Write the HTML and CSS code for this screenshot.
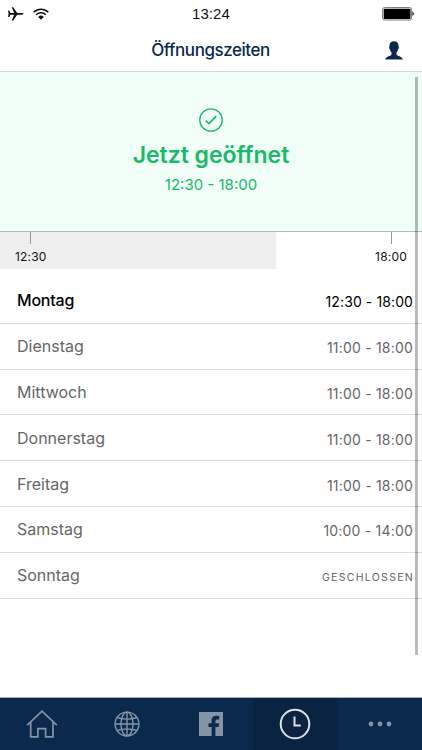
FILE: index.html
```html
<!DOCTYPE html>
<html lang="de">
<head>
    <meta charset="UTF-8">
    <meta name="viewport" content="width=device-width, initial-scale=1.0">
    <title>Öffnungszeiten</title>
    <link rel="stylesheet" href="styles.css">
</head>
<body>
    <div class="app">
        <div class="status-bar">
            <div class="signal">
                <svg width="16" height="14" viewBox="0 0 16 14"><path d="M0 3.400h1.100L2.600 5.900H6.200L3.700.3h1.500L9.200 5.900h4.600c2.300 0 2.300 1.800 0 1.800H9.200l-4 5.800H3.700l2.500-5.800H2.600L1.100 10H0l.6-3.200z" fill="#111"/></svg>
                <svg width="16" height="12" viewBox="0 0 16 12"><g fill="none" stroke="#111" stroke-width="1.500"><path d="M.7 4.200a10.300 10.300 0 0 1 14.600 0"/><path d="M3.100 6.700a6.900 6.900 0 0 1 9.800 0"/></g><path d="M5.200 8.900a4 4 0 0 1 5.600 0L8 11.700z" fill="#111"/></svg>
            </div>
            <span class="clock">13:24</span>
            <svg class="battery" width="32" height="14" viewBox="0 0 32 14"><rect x=".6" y=".6" width="29" height="12.400" rx="2" fill="#fff" stroke="#777" stroke-width="1"/><rect x="1.700" y="1.700" width="26.800" height="10.200" rx="1" fill="#000"/><path d="M30.400 4.800c2 .7 2 3.300 0 4z" fill="#222"/></svg>
        </div>

        <header class="header">
            <h1>Öffnungszeiten</h1>
            <svg class="user" width="18" height="19" viewBox="0 0 18 19"><path d="M9 .3c3 0 4.600 1.800 4.500 4.800 0 .7.6 1 .3 2.200-.2.7-.6.9-.8 1.300-.3 1.500-.9 2.300-1.500 3v2c.5 1.500 5.700 1.800 6.200 4.900H.3c.5-3.100 5.700-3.400 6.200-4.900v-2c-.6-.7-1.200-1.500-1.500-3-.2-.4-.6-.6-.8-1.300-.3-1.200.3-1.500.3-2.200C4.400 2.100 6 .3 9 .3z" fill="#0b294d"/></svg>
        </header>

        <main class="content">
            <section class="current">
                <svg width="24" height="24" viewBox="0 0 24 24" fill="none" stroke="#19b96a"><circle cx="12" cy="12" r="11.200" stroke-width="1.300"/><path d="M6.700 12.600l3.300 3 7.200-7.500" stroke-width="1.700"/></svg>
                <h2>Jetzt geöffnet</h2>
                <p>12:30 - 18:00</p>
            </section>

            <div class="timeline">
                <div class="elapsed"></div>
                <div class="tick">12:30</div>
                <div class="tick">18:00</div>
            </div>

            <ul class="days">
                <li class="today"><span>Montag</span><time>12:30 - 18:00</time></li>
                <li><span>Dienstag</span><time>11:00 - 18:00</time></li>
                <li><span>Mittwoch</span><time>11:00 - 18:00</time></li>
                <li><span>Donnerstag</span><time>11:00 - 18:00</time></li>
                <li><span>Freitag</span><time>11:00 - 18:00</time></li>
                <li><span>Samstag</span><time>10:00 - 14:00</time></li>
                <li><span>Sonntag</span><time class="closed">GESCHLOSSEN</time></li>
            </ul>
            <div class="scrollbar"></div>
        </main>

        <nav class="tabs">
            <a class="tab"><svg width="32" height="28" viewBox="0 0 32 28" fill="none" stroke="#8494a6" stroke-width="1.700"><path d="M1.200 15.200L16 1.200l14.800 14M4.700 12.300v14.500h7.200v-8.200h7.700v8.200h7.400V12.300"/></svg></a>
            <a class="tab"><svg width="26" height="26" viewBox="0 0 26 26" fill="none" stroke="#8494a6" stroke-width="1.400"><circle cx="13" cy="13" r="11.900"/><ellipse cx="13" cy="13" rx="6" ry="11.900"/><path d="M13 1v24M1 13h24M3 6.500c6 2 14 2 20 0M3 19.500c6-2 14-2 20 0"/></svg></a>
            <a class="tab"><svg width="24" height="24" viewBox="0 0 24 24"><path d="M0 0h24v24h-7.600v-9h3.200l.5-3.700h-3.700V9.100c0-1.200.5-1.700 1.800-1.700h2V4c-4.500-.6-7.600.4-7.600 4.500v2.800H9.500V15h3.100v9H0z" fill="#8494a6"/></svg></a>
            <a class="tab active"><svg width="32" height="32" viewBox="0 0 32 32" fill="none" stroke="#dce1e7" stroke-width="2"><circle cx="16" cy="16" r="14.300"/><path d="M15.500 8.500v9h6.300"/></svg></a>
            <a class="tab"><svg width="24" height="6" viewBox="0 0 24 6" fill="#8494a6"><circle cx="3" cy="3" r="2.400"/><circle cx="12" cy="3" r="2.400"/><circle cx="21" cy="3" r="2.400"/></svg></a>
        </nav>
    </div>
</body>
</html>
```

FILE: styles.css
```css
* {
    box-sizing: border-box;
}

body {
    margin: 0;
    font-family: Inter, "Liberation Sans", sans-serif;
    background: #fff;
    color: #666;
}

svg {
    display: block;
}

.app {
    display: flex;
    flex-direction: column;
    height: 750px;
    overflow: hidden;
}

.status-bar {
    display: grid;
    grid-template-columns: 1fr auto 1fr;
    align-items: center;
    height: 28px;
    padding: 0 8px;
}

.signal {
    display: flex;
    align-items: center;
    gap: 9px;
}

.clock {
    font-family: "Liberation Sans", sans-serif;
    font-size: 15px;
    line-height: 16px;
    padding-bottom: 1px;
    letter-spacing: 0.1px;
    color: #111;
}

.battery {
    justify-self: end;
}

.header {
    display: grid;
    grid-template-columns: 1fr auto 1fr;
    align-items: center;
    height: 44px;
    padding: 1px 19px 0 18px;
    border-bottom: 1px solid #cfd9d8;
}

.header h1 {
    grid-column: 2;
    margin: 0;
    font-size: 17px;
    font-weight: 500;
    letter-spacing: -0.45px;
    color: #0b294d;
}

.user {
    justify-self: end;
}

.content {
    position: relative;
    flex: 1;
}

.current {
    display: flex;
    flex-direction: column;
    align-items: center;
    height: 160px;
    padding-top: 36px;
    background: #f1fdf7;
    border-bottom: 1px solid #afb9b8;
    color: #19b96a;
}

.current h2 {
    margin: 8px 0 0;
    font-size: 23px;
    line-height: 30px;
    font-weight: 600;
}

.current p {
    margin: 5px 0 0;
    font-size: 15px;
    line-height: 20px;
}

.timeline {
    position: relative;
    display: flex;
    justify-content: space-between;
    height: 37px;
    padding: 0 15px;
    font-size: 12px;
    letter-spacing: 0.2px;
    color: #111;
}

.elapsed {
    position: absolute;
    top: 0;
    left: 0;
    width: 276px;
    height: 37px;
    background: #efefef;
}

.tick {
    position: relative;
}

.tick::before {
    content: "";
    display: block;
    width: 1px;
    height: 12px;
    margin: 0 auto 5px;
    background: #999;
}

.days {
    list-style: none;
    margin: 0;
    padding: 9px 0 0;
}

.days li {
    display: flex;
    justify-content: space-between;
    align-items: center;
    height: 45.8px;
    padding: 0 9px 0 17px;
    border-bottom: 1px solid #dcdcde;
    font-size: 16px;
}

.days time {
    padding-top: 3px;
    font-size: 14px;
    letter-spacing: 0.2px;
}

.days .today {
    color: #000;
}

.days .today time {
    letter-spacing: 0.1px;
}

.days .closed {
    padding-top: 5px;
    font-size: 10.5px;
    letter-spacing: 1.3px;
    margin-right: -1px;
}

.today span {
    font-weight: 500;
    letter-spacing: -0.2px;
}

.scrollbar {
    position: absolute;
    top: 5px;
    right: 4px;
    width: 3px;
    height: 578px;
    background: rgba(0, 0, 0, 0.27);
}

.tabs {
    display: grid;
    grid-template-columns: repeat(5, 1fr);
    height: 53px;
    background: #0b294d;
    border-top: 1px solid #a3adb8;
}

.tab {
    display: flex;
    align-items: center;
    justify-content: center;
}

.active {
    background: #092341;
}
```
